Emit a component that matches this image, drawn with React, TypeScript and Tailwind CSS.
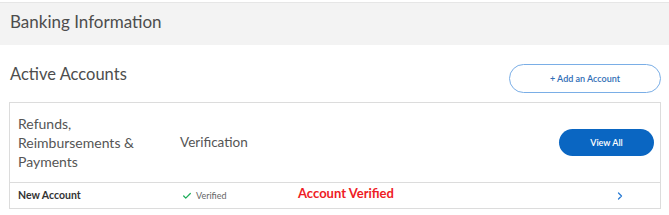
import { Check, ChevronRight } from 'lucide-react'

const font = { fontFamily: 'Lato, "Open Sans", Arial, sans-serif' }

export default function App() {
  return (
    <div className="h-[215px] w-[669px] overflow-hidden bg-white text-[#4a4a4a]" style={font}>
      <div className="mt-[2px] h-[43px] border-t border-[#e6e6e6] bg-[#f3f3f3] pl-[10px] pt-[9px] text-[17px] leading-[20px] text-[#4d4d4d]">
        Banking Information
      </div>

      <div className="flex items-start justify-between pl-[10px] pr-[8px] pt-[19px]">
        <div className="text-[16.5px] leading-[20px] text-[#4d4d4d]">Active Accounts</div>
        <button className="h-[29px] w-[152px] rounded-full border border-[#7aaee6] text-[9px] font-semibold text-[#2f6db5]">
          + Add an Account
        </button>
      </div>

      <div className="ml-[9px] mr-[8px] mt-[9px] border border-[#dcdcdc]">
        <div className="flex h-[80px] items-center border-b border-[#dcdcdc] pl-[8px] pr-[6px]">
          <div className="w-[162px] text-[14px] leading-[19px] text-[#555]">
            Refunds,
            <br />
            Reimbursements &amp;
            <br />
            Payments
          </div>
          <div className="flex-1 text-[13.5px] text-[#555]">Verification</div>
          <button className="h-[27px] w-[95px] rounded-full bg-[#0a66c2] text-[9px] font-semibold text-white">
            View All
          </button>
        </div>
        <div className="flex h-[25px] items-center pl-[8px]">
          <div className="w-[164px] text-[10.5px] font-bold text-[#333]">New Account</div>
          <div className="flex w-[116px] items-center gap-[4px] pt-[1px] text-[9px] text-[#666]">
            <Check className="h-[10px] w-[10px] text-[#1fae5b]" strokeWidth={3} />
            Verified
          </div>
          <div className="flex-1 pb-[3px] text-[13px] font-bold text-[#ee1c25]">Account Verified</div>
          <ChevronRight className="mr-[34px] h-[12px] w-[12px] text-[#2a7bd4]" strokeWidth={2.5} />
        </div>
      </div>
    </div>
  )
}
